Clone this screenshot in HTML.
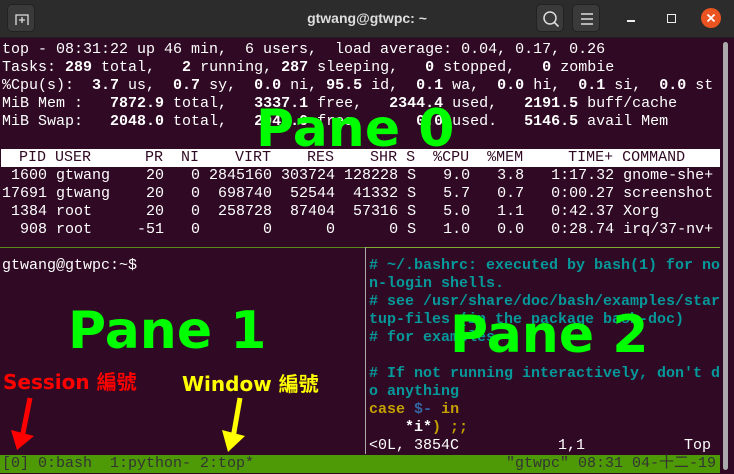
<!DOCTYPE html>
<html><head><meta charset="utf-8"><style>
*{margin:0;padding:0;box-sizing:border-box}
body{width:734px;height:474px;overflow:hidden;background:#300a24;position:relative;font-family:"Liberation Mono","Noto Sans CJK TC",monospace}
#tb{position:absolute;left:0;top:0;width:734px;height:38px;background:#2c2c2c;border-bottom:1px solid #1e1e1e}
.btn{position:absolute;top:4px;width:28px;height:28px;background:#3a3a3a;border-radius:5px;border:1px solid #222}
#title{position:absolute;left:0;width:734px;top:10px;text-align:center;color:#ddd;font:bold 14px "Liberation Sans",sans-serif}
.l{position:absolute;left:2px;height:18px;line-height:18px;font-size:15px;color:#fff;white-space:pre}
b{font-weight:bold}
.c{color:#06989a;font-weight:bold}
.big{position:absolute;color:#00ff00;font:bold 52px "DejaVu Sans",sans-serif;white-space:pre;line-height:1}
.lab{position:absolute;font:bold 20px "DejaVu Sans","Noto Sans CJK TC",sans-serif;white-space:pre;line-height:1}
</style></head><body>
<div id="tb">
 <div class="btn" style="left:7px"><svg width="28" height="28"><path d="M8 20V10h12v10M14 12v6M11 15h6" stroke="#ddd" fill="none" stroke-width="1.3"/></svg></div>
 <div id="title">gtwang@gtwpc: ~</div>
 <div class="btn" style="left:536px"><svg width="28" height="28"><circle cx="13" cy="13" r="6" stroke="#ddd" stroke-width="1.5" fill="none"/><path d="M17.5 17.5l4 4" stroke="#ddd" stroke-width="1.6"/></svg></div>
 <div class="btn" style="left:572px"><svg width="28" height="28"><path d="M8 9h12M8 14h12M8 19h12" stroke="#ddd" stroke-width="1.5"/></svg></div>
 <div style="position:absolute;left:627px;top:20px;width:8px;height:2px;background:#eee"></div>
 <div style="position:absolute;left:667px;top:14px;width:9px;height:9px;border:1.5px solid #eee"></div>
 <div style="position:absolute;left:701px;top:8px;width:20px;height:20px;border-radius:50%;background:#e95420"><svg width="20" height="20"><path d="M6.5 6.5l7 7M13.5 6.5l-7 7" stroke="#fff" stroke-width="1.8"/></svg></div>
</div>
<div style="position:absolute;left:723px;top:42px;width:5px;height:428px;background:#aaa;border-radius:3px"></div>

<div class="l" style="top:41px">top - 08:31:22 up 46 min,  6 users,  load average: 0.04, 0.17, 0.26</div>
<div class="l" style="top:59px">Tasks: <b>289</b> total,   <b>2</b> running, <b>287</b> sleeping,   <b>0</b> stopped,   <b>0</b> zombie</div>
<div class="l" style="top:77px">%Cpu(s):  <b>3.7</b> us,  <b>0.7</b> sy,  <b>0.0</b> ni, <b>95.5</b> id,  <b>0.1</b> wa,  <b>0.0</b> hi,  <b>0.1</b> si,  <b>0.0</b> st</div>
<div class="l" style="top:95px">MiB Mem :   <b>7872.9</b> total,   <b>3337.1</b> free,   <b>2344.4</b> used,   <b>2191.5</b> buff/cache</div>
<div class="l" style="top:113px">MiB Swap:   <b>2048.0</b> total,   <b>2048.0</b> free,      <b>0.0</b> used.   <b>5146.5</b> avail Mem</div>
<div class="l" style="top:149px;left:1px;width:719px;background:#fff;color:#300a24">  PID USER      PR  NI    VIRT    RES    SHR S  %CPU  %MEM     TIME+ COMMAND</div>
<div class="l" style="top:167px"> 1600 gtwang    20   0 2845160 303724 128228 S   9.0   3.8   1:17.32 gnome-she+</div>
<div class="l" style="top:185px">17691 gtwang    20   0  698740  52544  41332 S   5.7   0.7   0:00.27 screenshot</div>
<div class="l" style="top:203px"> 1384 root      20   0  258728  87404  57316 S   5.0   1.1   0:42.37 Xorg</div>
<div class="l" style="top:221px">  908 root     -51   0       0      0      0 S   1.0   0.0   0:28.74 irq/37-nv+</div>

<div style="position:absolute;left:0;top:247px;width:366px;height:1px;background:#5a8a1a"></div>
<div style="position:absolute;left:366px;top:247px;width:354px;height:1px;background:#7fae2f"></div>
<div style="position:absolute;left:365px;top:247px;width:1px;height:207px;background:#aaa"></div>

<div class="l" style="top:257px">gtwang@gtwpc:~$</div>

<div class="l c" style="top:257px;left:369px"># ~/.bashrc: executed by bash(1) for no</div>
<div class="l c" style="top:275px;left:369px">n-login shells.</div>
<div class="l c" style="top:293px;left:369px"># see /usr/share/doc/bash/examples/star</div>
<div class="l c" style="top:311px;left:369px">tup-files (in the package bash-doc)</div>
<div class="l c" style="top:329px;left:369px"># for examples</div>
<div class="l c" style="top:365px;left:369px"># If not running interactively, don't d</div>
<div class="l c" style="top:383px;left:369px">o anything</div>
<div class="l" style="top:401px;left:369px;font-weight:bold"><span style="color:#c4a000">case</span> <span style="color:#3465a4">$-</span> <span style="color:#c4a000">in</span></div>
<div class="l" style="top:419px;left:369px;font-weight:bold">    *i*<span style="color:#c4a000">) ;;</span></div>
<div class="l" style="top:437px;left:369px">&lt;0L, 3854C           1,1           Top</div>

<div style="position:absolute;left:0;top:455px;width:720px;height:18px;background:#4e9a06"></div>
<div class="l" style="top:455px;color:#333">[0] 0:bash  1:python- 2:top*</div>
<div class="l" style="top:455px;left:506px;color:#333">"gtwpc" 08:31 04-十二-19</div>

<div class="big" style="left:256px;top:103px">Pane 0</div>
<div class="big" style="left:68px;top:305px">Pane 1</div>
<div class="big" style="left:450px;top:309px">Pane 2</div>
<div class="lab" style="left:3px;top:372px;color:#ff0000">Session 編號</div>
<div class="lab" style="left:182px;top:374px;color:#ffff00">Window 編號</div>
<svg style="position:absolute;left:0;top:390px" width="300" height="64">
<path d="M30 8L22 48" stroke="#ff0000" stroke-width="5"/><path d="M11 40L17 60L34 46Z" fill="#ff0000"/>
<path d="M240 8L233 48" stroke="#ffff00" stroke-width="5"/><path d="M222 40L228 62L245 46Z" fill="#ffff00"/>
</svg>
</body></html>
